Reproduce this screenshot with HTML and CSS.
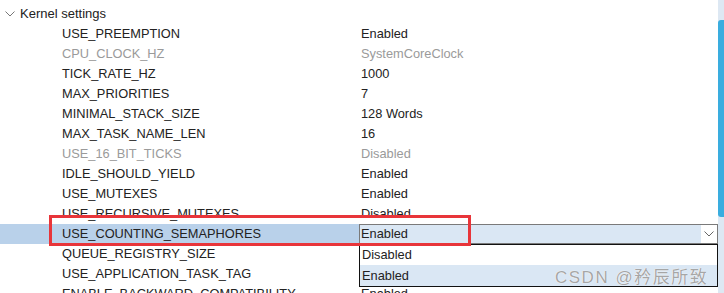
FILE: index.html
```html
<!DOCTYPE html>
<html>
    <head>
        <title>Kernel settings</title>
        <link rel="stylesheet" href="styles.css">
    </head>
    <body>
        <div class="panel">
            <div class="tree">
                <div class="group">
                    <svg class="twisty" width="10" height="6" viewBox="0 0 10 6"><path d="M0.5 0.5 L5 5 L9.5 0.5" fill="none" stroke="#777" stroke-width="1"/></svg>
                    <span>Kernel settings</span>
                </div>
                <div class="row"><span class="key">USE_PREEMPTION</span><span class="val">Enabled</span></div>
                <div class="row off"><span class="key">CPU_CLOCK_HZ</span><span class="val">SystemCoreClock</span></div>
                <div class="row"><span class="key">TICK_RATE_HZ</span><span class="val">1000</span></div>
                <div class="row"><span class="key">MAX_PRIORITIES</span><span class="val">7</span></div>
                <div class="row"><span class="key">MINIMAL_STACK_SIZE</span><span class="val">128 Words</span></div>
                <div class="row"><span class="key">MAX_TASK_NAME_LEN</span><span class="val">16</span></div>
                <div class="row off"><span class="key">USE_16_BIT_TICKS</span><span class="val">Disabled</span></div>
                <div class="row"><span class="key">IDLE_SHOULD_YIELD</span><span class="val">Enabled</span></div>
                <div class="row"><span class="key">USE_MUTEXES</span><span class="val">Enabled</span></div>
                <div class="row"><span class="key">USE_RECURSIVE_MUTEXES</span><span class="val">Disabled</span></div>
                <div class="row selected">
                    <span class="key">USE_COUNTING_SEMAPHORES</span>
                    <div class="combo">
                        <span class="current">Enabled</span>
                        <div class="arrow"><svg width="10" height="6" viewBox="0 0 10 6"><path d="M0.5 0.5 L5 5 L9.5 0.5" fill="none" stroke="#666" stroke-width="1"/></svg></div>
                        <!-- open list of the combo -->
                        <div class="options">
                            <div class="option">Disabled</div>
                            <div class="option hover">Enabled</div>
                        </div>
                    </div>
                    <div class="mark"></div>
                </div>
                <div class="row"><span class="key">QUEUE_REGISTRY_SIZE</span><span class="val">8</span></div>
                <div class="row"><span class="key">USE_APPLICATION_TASK_TAG</span><span class="val">Disabled</span></div>
                <div class="row"><span class="key">ENABLE_BACKWARD_COMPATIBILITY</span><span class="val">Enabled</span></div>
            </div>
            <div class="scrollbar"><div class="thumb"></div></div>
        </div>
        <div class="watermark">CSDN @矜辰所致</div>
    </body>
</html>
```

FILE: styles.css
```css
body {
    margin: 0;
    width: 724px;
    height: 293px;
    overflow: hidden;
    background: white;
    font-family: "Liberation Sans", Arial, sans-serif;
    font-size: 12.8px;
    color: #222;
    position: relative;
}
.panel {
    display: flex;
    height: 293px;
}
.tree {
    flex: 1;
    padding-top: 4px;
}
.group {
    height: 20px;
    line-height: 19px;
    display: flex;
    align-items: flex-start;
    gap: 5px;
    padding-left: 5px;
    font-size: 13px;
}
.twisty {
    margin-top: 7px;
}
.row {
    height: 20px;
    display: flex;
    align-items: flex-start;
    position: relative;
}
.key,
.val {
    line-height: 19px;
}
.key {
    width: 298px;
    padding-left: 62px;
}
.val {
    padding-left: 1px;
}
.off {
    color: #9a9a9a;
}
.selected {
    background: #b9d1ea;
}
.combo {
    position: relative;
    flex: 1;
    height: 18px;
    margin-left: -1px;
    border: 1px solid #7a7a7a;
    background: #dae7f4;
    display: flex;
    padding-left: 1px;
}
.current {
    flex: 1;
    line-height: 17px;
}
.arrow {
    width: 16px;
    height: 18px;
    background: white;
    display: flex;
    align-items: center;
    justify-content: center;
}
.options {
    position: absolute;
    left: -1px;
    right: -1px;
    top: 19px;
    border: 1px solid #111;
    background: white;
    z-index: 2;
}
.option {
    height: 20px;
    line-height: 19px;
    padding-left: 2px;
}
.option.hover {
    background: #dae7f4;
    height: 21px;
    line-height: 21px;
}
.mark {
    position: absolute;
    left: 49px;
    top: -9px;
    width: 416px;
    height: 25px;
    border: 3px solid #e8353a;
    z-index: 3;
}
.scrollbar {
    width: 6px;
    background: #dde8f3;
}
.thumb {
    margin-top: 20px;
    height: 197px;
    background: #3aaddf;
    border-radius: 3px 0 0 3px;
}
.watermark {
    position: absolute;
    left: 555px;
    top: 263px;
    z-index: 5;
    font-family: "Liberation Sans", "Noto Sans CJK SC", sans-serif;
    font-size: 17px;
    color: #a6a6a6;
    text-shadow: 0 0 1px white, 0 0 1px white;
    letter-spacing: 1.5px;
}
```
